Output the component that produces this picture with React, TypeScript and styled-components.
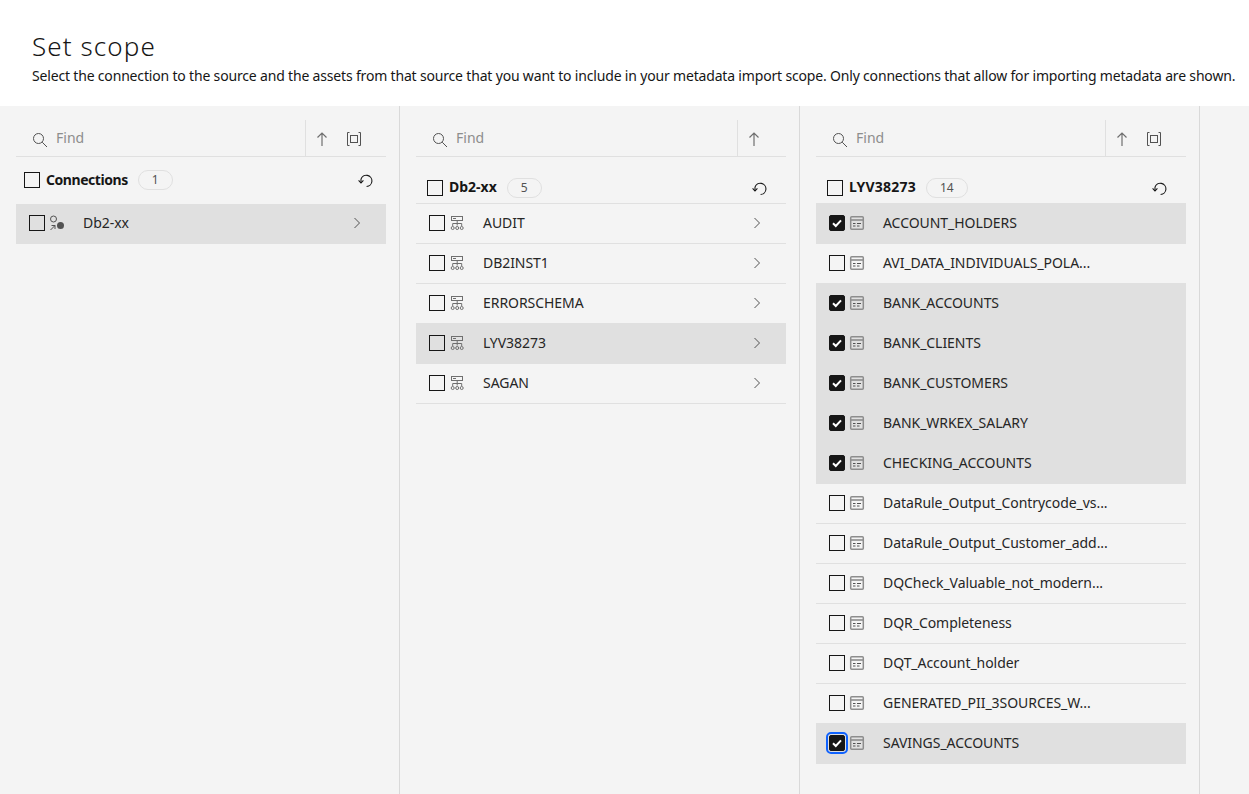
import { createGlobalStyle, styled } from 'styled-components';

const GlobalStyle = createGlobalStyle`
  html, body {
    margin: 0;
    padding: 0;
    height: 100%;
    overflow: hidden;
    background: #f4f4f4;
    font-family: 'Noto Sans', 'Open Sans', sans-serif;
    color: #161616;
  }
`;

type RowData = { label: string; checked?: boolean; selected?: boolean; focused?: boolean };

const schemas: RowData[] = [
  { label: 'AUDIT' },
  { label: 'DB2INST1' },
  { label: 'ERRORSCHEMA' },
  { label: 'LYV38273', selected: true },
  { label: 'SAGAN' },
];

const tables: RowData[] = [
  { label: 'ACCOUNT_HOLDERS', checked: true, selected: true },
  { label: 'AVI_DATA_INDIVIDUALS_POLA...' },
  { label: 'BANK_ACCOUNTS', checked: true, selected: true },
  { label: 'BANK_CLIENTS', checked: true, selected: true },
  { label: 'BANK_CUSTOMERS', checked: true, selected: true },
  { label: 'BANK_WRKEX_SALARY', checked: true, selected: true },
  { label: 'CHECKING_ACCOUNTS', checked: true, selected: true },
  { label: 'DataRule_Output_Contrycode_vs...' },
  { label: 'DataRule_Output_Customer_add...' },
  { label: 'DQCheck_Valuable_not_modern...' },
  { label: 'DQR_Completeness' },
  { label: 'DQT_Account_holder' },
  { label: 'GENERATED_PII_3SOURCES_W...' },
  { label: 'SAVINGS_ACCOUNTS', checked: true, selected: true, focused: true },
];

function SearchIcon() {
  return (
    <svg width="16" height="16" viewBox="0 0 16 16" fill="none" stroke="#525252" strokeWidth="1">
      <circle cx="6.5" cy="6.5" r="5" />
      <path d="M10.2 10.2L15 15" />
    </svg>
  );
}

function SortIcon() {
  return (
    <svg width="16" height="16" viewBox="0 0 16 16" fill="none" stroke="#6f6f6f" strokeWidth="1.2">
      <path d="M8 15V2M3.5 6.5L8 2l4.5 4.5" />
    </svg>
  );
}

function FitIcon() {
  return (
    <svg width="16" height="16" viewBox="0 0 16 16" fill="none" stroke="#525252" strokeWidth="1">
      <path d="M3.5 1.5H1.5v13h2M12.5 1.5h2v13h-2" />
      <rect x="4.5" y="4.5" width="7" height="7" />
    </svg>
  );
}

function ResetIcon() {
  return (
    <svg width="16" height="16" viewBox="0 0 16 16" fill="none" stroke="#161616" strokeWidth="1.1">
      <path d="M3 10V7.2a5.6 5.6 0 1 1 5.6 7.3" />
      <path d="M0.6 8.4L3 11l2.4-2.6" />
    </svg>
  );
}

function ChevronIcon() {
  return (
    <svg width="16" height="16" viewBox="0 0 16 16" fill="none" stroke="#525252" strokeWidth="1">
      <path d="M5.5 3l5 5-5 5" />
    </svg>
  );
}

function ConnectionIcon() {
  return (
    <svg width="16" height="16" viewBox="0 0 16 16" fill="none" stroke="#525252" strokeWidth="1">
      <circle cx="4.5" cy="4" r="3" />
      <path d="M1.5 15L6 10.5M2.5 10.5H6V14" />
      <circle cx="11.5" cy="10.5" r="3.5" fill="#525252" stroke="none" />
    </svg>
  );
}

function SchemaIcon() {
  return (
    <svg width="16" height="16" viewBox="0 0 16 16" fill="none" stroke="#6f6f6f" strokeWidth="1">
      <rect x="2.5" y="1.5" width="11" height="4" />
      <path d="M4 3.5h3" />
      <path d="M8.2 5.5v5M3.7 11V8.5h9V11" />
      <circle cx="3.7" cy="13" r="1.5" />
      <circle cx="8.2" cy="13" r="1.5" />
      <circle cx="12.7" cy="13" r="1.5" />
    </svg>
  );
}

function TableIcon() {
  return (
    <svg width="16" height="16" viewBox="0 0 16 16" fill="none" stroke="#8d8d8d" strokeWidth="1.5">
      <rect x="1.7" y="1.7" width="12.6" height="12.6" rx="1" />
      <path d="M2 5h12" strokeWidth="1.6" />
      <path d="M4 8.5h2.5M8 8.5h4M4 11h2.5M8 11h2.5" stroke="#525252" strokeWidth="1" />
    </svg>
  );
}

const Page = styled.div`
  display: flex;
  flex-direction: column;
  height: 100vh;
  overflow: hidden;
`;

const Header = styled.header`
  box-sizing: border-box;
  height: 106px;
  padding: 29px 0 0 32px;
  background: #fff;
`;

const Title = styled.h1`
  margin: 0;
  font-size: 26px;
  line-height: 34px;
  font-weight: 300;
  letter-spacing: 1.1px;
`;

const Description = styled.p`
  margin: 3px 0 0;
  font-size: 14px;
  line-height: 20px;
  letter-spacing: -0.175px;
  white-space: nowrap;
`;

const Columns = styled.main`
  flex: 1;
  display: flex;
  min-height: 0;
`;

const Column = styled.section`
  box-sizing: border-box;
  width: 400px;
  padding: 14px 13px 0 16px;
  border-right: 1px solid #d9d9d9;
`;

const Toolbar = styled.div`
  display: flex;
  align-items: stretch;
  height: 36px;
  padding-right: 16px;
  border-bottom: 1px solid #e0e0e0;
`;

const SearchBox = styled.div`
  flex: 1;
  display: flex;
  align-items: center;
  gap: 8px;
  padding: 0 0 2px 16px;
  font-size: 14px;
  color: #8d8d8d;
`;

const SearchGlyph = styled.span`
  display: flex;
  margin-top: 5px;
`;

const ToolButton = styled.div<{ $divided?: boolean }>`
  box-sizing: border-box;
  display: flex;
  align-items: center;
  justify-content: center;
  width: ${(p) => (p.$divided ? '33px' : '32px')};
  padding-top: 2px;
  border-left: ${(p) => (p.$divided ? '1px solid #e0e0e0' : 'none')};
`;

const ListHeader = styled.div<{ $inset?: boolean }>`
  box-sizing: border-box;
  display: flex;
  align-items: center;
  height: 47px;
  padding: ${(p) => (p.$inset ? '15px 0 0 11px' : '0 0 2px 8px')};
  border-bottom: ${(p) => (p.$inset ? '1px solid #e0e0e0' : 'none')};
`;

const ListName = styled.span<{ $spacing?: string; $inset?: boolean }>`
  margin: ${(p) => (p.$inset ? '0 0 2px 6px' : '0 0 0 6px')};
  font-size: 14px;
  font-weight: 700;
  letter-spacing: ${(p) => p.$spacing ?? '0'};
`;

const CountTag = styled.span`
  box-sizing: border-box;
  display: inline-flex;
  align-items: center;
  justify-content: center;
  min-width: 33px;
  height: 20px;
  margin-left: 10px;
  padding: 0 13px;
  border: 1px solid #e0e0e0;
  border-radius: 10px;
  font-size: 12px;
  color: #525252;
`;

const ResetButton = styled.span<{ $inset?: boolean }>`
  display: flex;
  margin-left: auto;
  margin-right: ${(p) => (p.$inset ? '18px' : '12px')};
`;

const Box = styled.span<{ $checked?: boolean; $focused?: boolean }>`
  box-sizing: border-box;
  flex: none;
  display: flex;
  align-items: center;
  justify-content: center;
  width: 16px;
  height: 16px;
  border: 1px solid #161616;
  background: ${(p) => (p.$checked ? '#161616' : 'transparent')};
  border-radius: ${(p) => (p.$checked ? '2px' : '0')};
  outline: ${(p) => (p.$focused ? '2px solid #0f62fe' : 'none')};
  outline-offset: 1px;
`;

const Row = styled.div<{ $selected?: boolean; $ruled?: boolean }>`
  box-sizing: border-box;
  display: flex;
  align-items: center;
  height: 40px;
  padding: 0 21px 2px 13px;
  font-size: 14px;
  letter-spacing: -0.05px;
  color: #262626;
  background: ${(p) => (p.$selected ? '#e0e0e0' : 'transparent')};
  box-shadow: ${(p) => (p.$ruled && !p.$selected ? 'inset 0 -1px 0 #e0e0e0' : 'none')};
`;

const RowIcon = styled.span`
  display: flex;
  margin-left: 4px;
`;

const RowLabel = styled.span`
  flex: 1;
  margin: 0 0 2px 18px;
  white-space: nowrap;
`;

const Filler = styled.div`
  flex: 1;
`;

function ListRow({ row, icon, chevron, ruled }: { row: RowData; icon: React.ReactNode; chevron?: boolean; ruled?: boolean }) {
  return (
    <Row $selected={row.selected} $ruled={ruled}>
      <Box $checked={row.checked} $focused={row.focused}>
        {row.checked && (
          <svg width="12" height="12" viewBox="0 0 12 12" fill="none" stroke="#fff" strokeWidth="2">
            <path d="M2 6.2l2.8 2.8L10 3.4" />
          </svg>
        )}
      </Box>
      <RowIcon>{icon}</RowIcon>
      <RowLabel>{row.label}</RowLabel>
      {chevron && <ChevronIcon />}
    </Row>
  );
}

function ColumnToolbar({ fit = true }: { fit?: boolean }) {
  return (
    <Toolbar>
      <SearchBox>
        <SearchGlyph>
          <SearchIcon />
        </SearchGlyph>
        Find
      </SearchBox>
      <ToolButton $divided>
        <SortIcon />
      </ToolButton>
      {fit && (
        <ToolButton>
          <FitIcon />
        </ToolButton>
      )}
    </Toolbar>
  );
}

export default function App() {
  return (
    <Page>
      <GlobalStyle />
      <Header>
        <Title>Set scope</Title>
        <Description>
          Select the connection to the source and the assets from that source that you want to include in your metadata
          import scope. Only connections that allow for importing metadata are shown.
        </Description>
      </Header>
      <Columns>
        <Column>
          <ColumnToolbar />
          <ListHeader>
            <Box />
            <ListName $spacing="-0.45px">Connections</ListName>
            <CountTag>1</CountTag>
            <ResetButton>
              <ResetIcon />
            </ResetButton>
          </ListHeader>
          <ListRow row={{ label: 'Db2-xx', selected: true }} icon={<ConnectionIcon />} chevron />
        </Column>
        <Column>
          <ColumnToolbar fit={false} />
          <ListHeader $inset>
            <Box />
            <ListName $inset>Db2-xx</ListName>
            <CountTag>5</CountTag>
            <ResetButton $inset>
              <ResetIcon />
            </ResetButton>
          </ListHeader>
          {schemas.map((row) => (
            <ListRow key={row.label} row={row} icon={<SchemaIcon />} chevron ruled />
          ))}
        </Column>
        <Column>
          <ColumnToolbar />
          <ListHeader $inset>
            <Box />
            <ListName $inset $spacing="0.2px">LYV38273</ListName>
            <CountTag>14</CountTag>
            <ResetButton $inset>
              <ResetIcon />
            </ResetButton>
          </ListHeader>
          {tables.map((row) => (
            <ListRow key={row.label} row={row} icon={<TableIcon />} ruled />
          ))}
        </Column>
        <Filler />
      </Columns>
    </Page>
  );
}
